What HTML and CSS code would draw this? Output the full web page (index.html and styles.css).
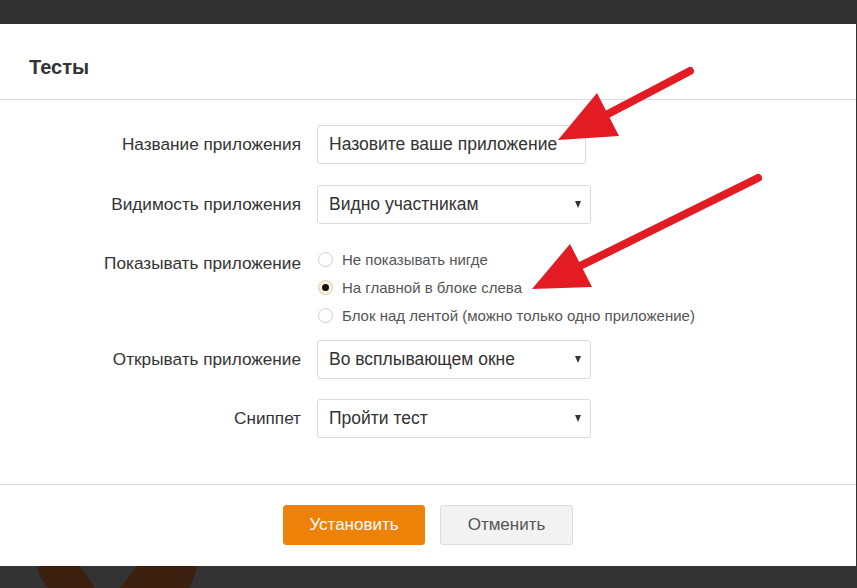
FILE: index.html
```html
<!DOCTYPE html>
<html lang="ru">
<head>
<meta charset="utf-8">
<title>Тесты</title>
<link rel="stylesheet" href="styles.css">
</head>
<body>
<div class="topbar"></div>
<div class="modal">
  <div class="modal-header"><h1 class="title">Тесты</h1></div>
  <div class="modal-body">
    <div class="row">
      <div class="label">Название приложения</div>
      <div class="input">Назовите ваше приложение</div>
    </div>
    <div class="row">
      <div class="label">Видимость приложения</div>
      <div class="select"><span>Видно участникам</span><i class="caret"></i></div>
    </div>
    <div class="row row-radio">
      <div class="label label-radio">Показывать приложение</div>
      <div class="radios">
        <div class="radio"><span class="dot"></span><span>Не показывать нигде</span></div>
        <div class="radio"><span class="dot checked"></span><span>На главной в блоке слева</span></div>
        <div class="radio"><span class="dot"></span><span>Блок над лентой (можно только одно приложение)</span></div>
      </div>
    </div>
    <div class="row row-after-radio">
      <div class="label">Открывать приложение</div>
      <div class="select"><span>Во всплывающем окне</span><i class="caret"></i></div>
    </div>
    <div class="row">
      <div class="label">Сниппет</div>
      <div class="select"><span>Пройти тест</span><i class="caret"></i></div>
    </div>
  </div>
  <div class="modal-footer">
    <button class="btn btn-primary">Установить</button>
    <button class="btn btn-secondary">Отменить</button>
  </div>
</div>
<div class="bottombar">
  <svg class="bg-logo" width="240" height="22" viewBox="0 0 240 22">
    <path d="M37 0 L80 0 L95 22 L48 22 Q39 12 37 0 Z" fill="#3b200f"/>
    <path d="M137 0 L197 0 Q195 12 189 22 L120 22 Z" fill="#3b200f"/>
  </svg>
</div>
<svg class="arrows" width="857" height="588" viewBox="0 0 857 588">
  <line x1="690" y1="71" x2="606" y2="115" stroke="#e31b23" stroke-width="8" stroke-linecap="round"/>
  <polygon points="597,93 619,136 558,140" fill="#e31b23"/>
  <line x1="758" y1="178" x2="580" y2="266" stroke="#e31b23" stroke-width="8" stroke-linecap="round"/>
  <polygon points="570,244 592,287 532,289" fill="#e31b23"/>
</svg>
</body>
</html>
```

FILE: styles.css
```css
html, body {
  margin: 0;
  padding: 0;
}
body {
  width: 857px;
  height: 588px;
  overflow: hidden;
  background: #323232;
  font-family: "Liberation Sans", Arial, sans-serif;
  color: #333;
  position: relative;
}
.topbar {
  height: 24px;
  background: #313131;
}
.modal {
  background: #fff;
  width: 856px;
  height: 542px;
  display: flex;
  flex-direction: column;
}
.modal-header {
  height: 75px;
  border-bottom: 1px solid #dcdcdc;
  box-sizing: content-box;
  padding-left: 29px;
}
.title {
  margin: 0;
  padding-top: 32px;
  font-size: 20px;
  line-height: 22px;
  font-weight: bold;
  color: #333;
}
.modal-body {
  padding-top: 25px;
  height: 359px;
  border-bottom: 1px solid #dcdcdc;
}
.row {
  display: grid;
  grid-template-columns: 301px auto;
  column-gap: 16px;
  align-items: center;
  justify-content: start;
  margin-bottom: 21px;
}
.row-radio {
  align-items: start;
  margin-bottom: 11px;
}
.row-after-radio {
  margin-bottom: 20px;
}
.label {
  text-align: right;
  font-size: 17.2px;
  color: #333;
}
.label-radio {
  line-height: 36px;
}
.input, .select {
  box-sizing: border-box;
  height: 39px;
  border: 1px solid #dadada;
  border-radius: 3px;
  padding-left: 11px;
  font-size: 17.5px;
  color: #333;
  display: flex;
  align-items: center;
}
.input {
  width: 269px;
}
.select {
  width: 274px;
  justify-content: space-between;
  padding-right: 9px;
}
.caret {
  width: 0;
  height: 0;
  border-left: 3.5px solid transparent;
  border-right: 3.5px solid transparent;
  border-top: 7px solid #333;
}
.radios {
  display: flex;
  flex-direction: column;
}
.radio {
  height: 28px;
  display: flex;
  align-items: center;
  gap: 9px;
  font-size: 15px;
  color: #555;
  padding-left: 1px;
}
.dot {
  box-sizing: border-box;
  width: 15px;
  height: 15px;
  border: 1px solid #cfcfcf;
  border-radius: 50%;
  background: #fff;
  display: flex;
  align-items: center;
  justify-content: center;
}
.dot.checked {
  background: #fbefd5;
  border-color: #d8cdb8;
}
.dot.checked::after {
  content: "";
  width: 7px;
  height: 7px;
  border-radius: 50%;
  background: #111;
}
.modal-footer {
  flex: 1;
  display: flex;
  justify-content: center;
  align-items: flex-start;
  gap: 15px;
  padding-top: 20px;
}
.btn {
  height: 40px;
  border-radius: 3px;
  font-family: "Liberation Sans", Arial, sans-serif;
  font-size: 17px;
  cursor: pointer;
}
.btn-primary {
  width: 142px;
  background: #ee8208;
  border: 1px solid #ee8208;
  color: #fff;
}
.btn-secondary {
  width: 133px;
  background: #f2f2f2;
  border: 1px solid #dcdcdc;
  color: #555;
}
.bottombar {
  height: 22px;
  background: #333;
  overflow: hidden;
}
.bg-logo {
  display: block;
}
.arrows {
  position: absolute;
  left: 0;
  top: 0;
  pointer-events: none;
}
```
